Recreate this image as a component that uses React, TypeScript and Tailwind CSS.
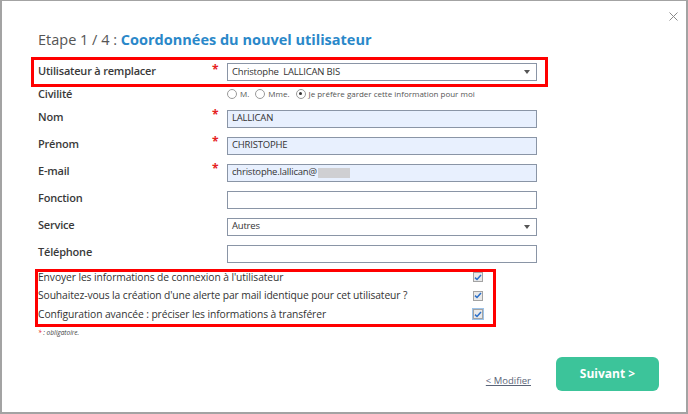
import { ReactNode } from "react";

const font = { fontFamily: '"Open Sans", "Liberation Sans", sans-serif' };

function Star({ show }: { show?: boolean }) {
  return (
    <div className="w-[15px] self-start pt-[4px] text-[12px] leading-[12px] font-bold text-[#e52222]">
      {show ? "*" : ""}
    </div>
  );
}

function Arrow() {
  return (
    <svg width="6" height="4" viewBox="0 0 6 4" className="mr-[2px]">
      <path d="M0 0 L6 0 L3 4 Z" fill="#555" />
    </svg>
  );
}

function Field({ value, filled, select, children }: { value?: string; filled?: boolean; select?: boolean; children?: ReactNode }) {
  return (
    <div
      className={`flex h-[18px] w-[310px] items-center justify-between border border-[#8a95a6] px-[4px] text-[9.5px] tracking-[-0.2px] text-[#333] ${
        filled ? "bg-[#e8f0fe]" : "bg-white"
      }`}
    >
      <span className="flex items-center whitespace-pre">
        {value}
        {children}
      </span>
      {select && <Arrow />}
    </div>
  );
}

function Row({ label, star, children }: { label: string; star?: boolean; children: ReactNode }) {
  return (
    <div className="flex h-[27px] items-center pl-[7px]">
      <div className="mb-[2px] w-[174px] text-[11px] font-semibold tracking-[-0.2px] text-[#3a3a3a]">{label}</div>
      <Star show={star} />
      {children}
    </div>
  );
}

function Radio({ checked, label }: { checked?: boolean; label: string }) {
  return (
    <label className="mr-[6px] flex items-center gap-[3px] text-[8px] text-[#555]">
      <span className="flex h-[10px] w-[10px] items-center justify-center rounded-full border border-[#9a9a9a] bg-white">
        {checked && <span className="h-[3px] w-[3px] rounded-full bg-[#333]" />}
      </span>
      {label}
    </label>
  );
}

function Check({ focus }: { focus?: boolean }) {
  return (
    <span
      className={`flex h-[10px] w-[10px] items-center justify-center border border-[#a3a3a3] bg-[#e9e9e9] ${
        focus ? "outline outline-1 outline-[#9cc3ea]" : ""
      }`}
    >
      <svg width="8" height="7" viewBox="0 0 8 7">
        <path d="M1 3.6 L3 5.5 L7 1" stroke="#2a6fc9" strokeWidth="1.5" fill="none" />
      </svg>
    </span>
  );
}

export default function App() {
  const options = [
    "Envoyer les informations de connexion à l'utilisateur",
    "Souhaitez-vous la création d'une alerte par mail identique pour cet utilisateur ?",
    "Configuration avancée : préciser les informations à transférer",
  ];

  return (
    <div
      style={font}
      className="relative flex h-[414px] w-[688px] flex-col border-t border-r-2 border-b-2 border-l-2 border-[#a3a3a3] bg-white pl-[29px]"
    >
      {/* close */}
      <button className="absolute top-[10px] right-[7px] p-[1px]" aria-label="Fermer">
        <svg width="9" height="9" viewBox="0 0 9 9">
          <path d="M0.5 0.5 L8.5 8.5 M8.5 0.5 L0.5 8.5" stroke="#8a8a8a" strokeWidth="1" />
        </svg>
      </button>

      <h1 className="mt-[28px] h-[22px] pl-[7px] text-[14.5px] leading-[22px] text-[#555]">
        Etape 1 / 4 : <span className="font-bold text-[#2a88c9]">Coordonnées du nouvel utilisateur</span>
      </h1>

      <div className="mt-[6px] flex h-[30px] w-[517px] items-center border-[3px] border-[#ff0000] pl-[4px]">
        <div className="mb-[2px] w-[174px] text-[11px] font-semibold tracking-[-0.2px] text-[#3a3a3a]">
          Utilisateur à remplacer
        </div>
        <Star show />
        <Field value="Christophe  LALLICAN BIS" select />
      </div>

      <div className="flex h-[18px] items-start pl-[7px]">
        <div className="w-[189px] text-[11px] leading-[13px] font-semibold tracking-[-0.2px] text-[#3a3a3a]">Civilité</div>
        <div className="flex h-[13px] items-center">
          <Radio label="M." />
          <Radio label="Mme." />
          <Radio checked label="Je préfère garder cette information pour moi" />
        </div>
      </div>

      <Row label="Nom" star>
        <Field value="LALLICAN" filled />
      </Row>
      <Row label="Prénom" star>
        <Field value="CHRISTOPHE" filled />
      </Row>
      <Row label="E-mail" star>
        <Field value="christophe.lallican@" filled>
          <span className="ml-[1px] h-[10px] w-[32px] bg-[#cfcfd2] blur-[0.6px]" />
        </Field>
      </Row>
      <Row label="Fonction">
        <Field />
      </Row>
      <Row label="Service">
        <Field value="Autres" select />
      </Row>
      <Row label="Téléphone">
        <Field />
      </Row>

      <div className="mt-[2px] ml-[4px] h-[58px] w-[461px] border-[3px] border-[#ff0000]">
        <div className="-mt-[4px] flex flex-col">
          {options.map((o, i) => (
            <div key={o} className="flex h-[18.5px] items-center justify-between pr-[10px]">
              <span className="text-[10.3px] tracking-[-0.1px] text-[#333]">{o}</span>
              <Check focus={i === 2} />
            </div>
          ))}
        </div>
      </div>

      <div className="mt-[1px] pl-[7px] text-[6.5px] leading-[9px] italic text-[#444]">
        <span className="text-[#e52222]">*</span> : obligatoire.
      </div>

      <div className="mt-auto mb-[21px] flex items-end justify-end gap-[25px] pr-[27px]">
        <a href="#" className="mb-[3px] text-[9.5px] text-[#5a6478] underline">
          &lt; Modifier
        </a>
        <button className="h-[34px] w-[103px] rounded-[6px] bg-[#3cc49a] text-[12px] font-bold text-white">
          Suivant &gt;
        </button>
      </div>
    </div>
  );
}
